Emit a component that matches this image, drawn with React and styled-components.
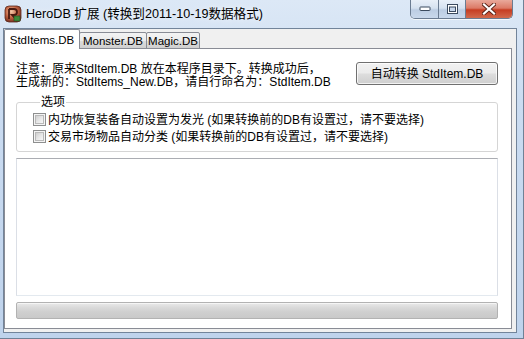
import React from "react";
import styled, { createGlobalStyle } from "styled-components";

const Global = createGlobalStyle`
  html, body { margin: 0; padding: 0; background: #ffffff; overflow: hidden; }
  * { box-sizing: border-box; }
`;

const UI_FONT = `"Liberation Sans", "Noto Sans CJK SC", sans-serif`;

const Window = styled.div`
  width: 524px;
  height: 339px;
  display: flex;
  flex-direction: column;
  background: linear-gradient(180deg, #dce8f6 0%, #cbdcf1 30%, #bfd3ec 100%);
  border-right: 1px solid #6f8196;
  border-bottom: 1px solid #6f8196;
  font-family: ${UI_FONT};
  font-size: 12px;
  color: #000;
`;

const TitleBar = styled.div`
  height: 28px;
  flex: none;
  display: flex;
  align-items: center;
  padding: 0 10px 0 4px;
`;

const Title = styled.div`
  margin-left: 4px;
  font-size: 12.6px;
  line-height: 14px;
  color: #000;
  text-shadow: 0 0 6px rgba(255, 255, 255, 0.9);
  white-space: nowrap;
`;

const CaptionGroup = styled.div`
  margin-left: auto;
  align-self: flex-start;
  display: flex;
  height: 19px;
  border: 1px solid #6b7c92;
  border-top: none;
  border-radius: 0 0 5px 5px;
  overflow: hidden;
  box-shadow: 0 1px 0 rgba(255, 255, 255, 0.7);
`;

const CaptionButton = styled.div`
  width: ${(p) => p.$w}px;
  display: flex;
  align-items: center;
  justify-content: center;
  background: ${(p) =>
    p.$close
      ? "linear-gradient(180deg, #e9a99b 0%, #dc7a66 45%, #c63d22 55%, #d26a4c 100%)"
      : "linear-gradient(180deg, #e8eff8 0%, #d6e2f0 45%, #bccde3 55%, #c9d8ec 100%)"};
  & + & {
    border-left: 1px solid #6b7c92;
  }
`;

const Client = styled.div`
  flex: 1;
  margin: 0 6px 8px 3px;
  border: 1px solid #72849a;
  background: #f0f0f0;
  display: flex;
  flex-direction: column;
  padding: 0 4px 3px 0;
`;

const TabStrip = styled.div`
  height: 20px;
  flex: none;
  display: flex;
  align-items: flex-end;
  position: relative;
  z-index: 1;
  margin-bottom: -1px;
`;

const Tab = styled.div`
  height: ${(p) => (p.$active ? 20 : 17)}px;
  width: ${(p) => p.$w}px;
  margin-left: ${(p) => (p.$first ? 0 : -1)}px;
  border: 1px solid #898c95;
  border-bottom: ${(p) => (p.$active ? "none" : "1px solid #898c95")};
  border-radius: 2px 2px 0 0;
  background: ${(p) =>
    p.$active ? "#ffffff" : "linear-gradient(180deg, #f3f3f3 0%, #ebebeb 50%, #dddddd 51%, #cfcfcf 100%)"};
  display: flex;
  align-items: center;
  justify-content: center;
  padding-top: ${(p) => (p.$active ? 0 : 1)}px;
  font-size: 11.5px;
  line-height: 12px;
  position: relative;
  z-index: ${(p) => (p.$active ? 2 : 1)};
  white-space: nowrap;
`;

const TabPage = styled.div`
  flex: 1;
  background: #ffffff;
  border: 1px solid #898c95;
  padding: 13px 13px 9px 11px;
  display: flex;
  flex-direction: column;
`;

const HeaderRow = styled.div`
  display: flex;
  justify-content: space-between;
  align-items: flex-start;
`;

const Notes = styled.div`
  line-height: 13px;
  font-size: 12px;
  white-space: nowrap;
  margin-top: 1px;
`;

const PushButton = styled.div`
  width: 142px;
  height: 23px;
  border: 1px solid #707070;
  border-radius: 3px;
  background: linear-gradient(180deg, #f2f2f2 0%, #ebebeb 48%, #dddddd 52%, #cfcfcf 100%);
  box-shadow: inset 0 0 0 1px rgba(255, 255, 255, 0.75);
  display: flex;
  align-items: center;
  justify-content: center;
  font-size: 12px;
  line-height: 12px;
  white-space: nowrap;
`;

const Group = styled.fieldset`
  margin: 7px 0 0 0;
  padding: 3px 0 6px 16px;
  border: 1px solid #d5d5d5;
  border-radius: 3px;
  min-width: 0;
`;

const Legend = styled.legend`
  margin-left: 7px;
  padding: 0 1px;
  font-size: 12px;
  line-height: 12px;
`;

const CheckRow = styled.label`
  display: flex;
  align-items: center;
  height: 17px;
  font-size: 12px;
  line-height: 12px;
  white-space: nowrap;
`;

const CheckBox = styled.span`
  width: 13px;
  height: 13px;
  flex: none;
  border: 1px solid #8e8f8f;
  background: #f4f4f4;
  margin-right: 2px;
  position: relative;
  &::after {
    content: "";
    position: absolute;
    inset: 1px;
    border: 1px solid #b9b9b9;
    background: linear-gradient(135deg, #cfcfcf 0%, #e6e6e6 50%, #f7f7f7 100%);
  }
`;

const Memo = styled.div`
  margin-top: 6px;
  height: 138px;
  flex: none;
  background: #ffffff;
  border: 1px solid #dbdfe6;
  border-top-color: #abadb3;
  border-bottom-color: #e3e9ef;
`;

const Progress = styled.div`
  margin-top: 6px;
  height: 17px;
  flex: none;
  border: 1px solid #b2b2b2;
  border-radius: 2px;
  background: linear-gradient(180deg, #eaeaea 0%, #dadada 30%, #cfcfcf 60%, #c9c9c9 100%);
  box-shadow: inset 0 1px 0 #f5f5f5;
`;

function AppIcon() {
  return (
    <svg width="18" height="18" viewBox="0 0 18 18">
      <defs>
        <radialGradient id="ig" cx="40%" cy="35%" r="70%">
          <stop offset="0%" stopColor="#f3c9a8" />
          <stop offset="55%" stopColor="#c0603f" />
          <stop offset="100%" stopColor="#6e2a1c" />
        </radialGradient>
      </defs>
      <rect x="1" y="1" width="16" height="16" rx="4" fill="url(#ig)" stroke="#5a2a1e" strokeWidth="0.8" />
      <path d="M5 4 h5 a3 3 0 0 1 0 6 h-2 l4 4 M5 4 v10" fill="none" stroke="#4a1a10" strokeWidth="1.8" />
      <rect x="10" y="11" width="6" height="5" fill="#3e8a3a" stroke="#234d21" strokeWidth="0.6" />
    </svg>
  );
}

function MinGlyph() {
  return (
    <svg width="12" height="6" viewBox="0 0 12 6">
      <rect x="1" y="1" width="10" height="3.5" rx="0.5" fill="#ffffff" stroke="#3b4a5e" strokeWidth="1" />
    </svg>
  );
}

function MaxGlyph() {
  return (
    <svg width="11" height="10" viewBox="0 0 11 10">
      <rect x="0.5" y="0.5" width="10" height="9" fill="#ffffff" stroke="#3b4a5e" strokeWidth="1" />
      <rect x="2.5" y="3" width="6" height="4.5" fill="#c6d5ea" stroke="#3b4a5e" strokeWidth="1" />
    </svg>
  );
}

function CloseGlyph() {
  return (
    <svg width="14" height="12" viewBox="0 0 14 12">
      <path d="M2 1.5 L12 10.5 M12 1.5 L2 10.5" stroke="#5b2418" strokeWidth="4" strokeLinecap="square" />
      <path d="M2 1.5 L12 10.5 M12 1.5 L2 10.5" stroke="#ffffff" strokeWidth="2.2" strokeLinecap="square" />
    </svg>
  );
}

export default function App() {
  return (
    <>
      <Global />
      <Window>
        <TitleBar>
          <AppIcon />
          <Title>HeroDB 扩展 (转换到2011-10-19数据格式)</Title>
          <CaptionGroup>
            <CaptionButton $w={27}>
              <MinGlyph />
            </CaptionButton>
            <CaptionButton $w={27}>
              <MaxGlyph />
            </CaptionButton>
            <CaptionButton $w={47} $close>
              <CloseGlyph />
            </CaptionButton>
          </CaptionGroup>
        </TitleBar>
        <Client>
          <TabStrip>
            <Tab $active $first $w={76}>StdItems.DB</Tab>
            <Tab $w={68}>Monster.DB</Tab>
            <Tab $w={54}>Magic.DB</Tab>
          </TabStrip>
          <TabPage>
            <HeaderRow>
              <Notes>
                注意：原来StdItem.DB 放在本程序目录下。转换成功后，
                <br />
                生成新的：StdItems_New.DB，请自行命名为：StdItem.DB
              </Notes>
              <PushButton>自动转换 StdItem.DB</PushButton>
            </HeaderRow>
            <Group>
              <Legend>选项</Legend>
              <CheckRow>
                <CheckBox />
                内功恢复装备自动设置为发光 (如果转换前的DB有设置过，请不要选择)
              </CheckRow>
              <CheckRow>
                <CheckBox />
                交易市场物品自动分类 (如果转换前的DB有设置过，请不要选择)
              </CheckRow>
            </Group>
            <Memo />
            <Progress />
          </TabPage>
        </Client>
      </Window>
    </>
  );
}
